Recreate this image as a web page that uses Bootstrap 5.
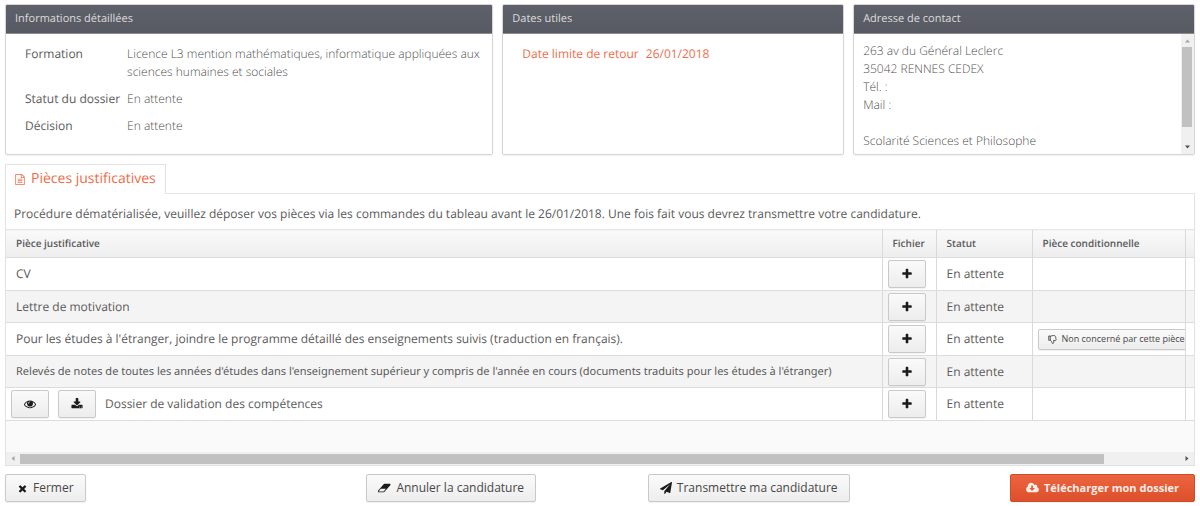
<!DOCTYPE html>
<html lang="fr">
<head>
<meta charset="utf-8">
<meta name="viewport" content="width=device-width, initial-scale=1">
<title>Candidature</title>
<link href="https://cdn.jsdelivr.net/npm/bootstrap@5.3.0/dist/css/bootstrap.min.css" rel="stylesheet">
<style>
  body { font-family: "Open Sans", sans-serif; font-size: 12px; line-height: 18px; color: #5a5a5a; background: #fff; text-rendering: geometricPrecision; }
  .page { padding: 4px 5px; }
  .summary { display: grid; grid-template-columns: 10fr 7fr 7fr; gap: 9px; }
  .panel { height: 151px; border: 1px solid #d5d5d5; border-radius: 2px; box-shadow: 0 1px 2px rgba(0,0,0,.06); overflow: hidden; }
  .panel-title { margin: -1px -1px 0; padding: 0 10px; height: 30px; line-height: 28px; font-size: 11px; font-weight: 400; color: #dcdcdd; background: linear-gradient(#5e6169, #575a62); border-top: 1px solid #aaa; border-bottom: 1px solid #8b8c90; flex: none; }
  .info { display: grid; grid-template-columns: max-content 1fr; gap: 9px 7px; padding: 11px 9px 11px 19px; }
  .info dt { font-weight: 400; }
  .info dd, address { font-weight: 300; color: #505050; }
  .accent { color: #ed6e4a; }
  .info.accent dd { font-weight: 400; color: inherit; }
  address { padding: 8px 9px 0; }
  .bar { background: #f0f0f0; flex: none; }
  .bar svg { display: block; flex: none; }
  .bar-v { width: 13px; padding: 5px 0; }
  .bar-h { height: 13px; padding: 0 5px; }
  .thumb-v { width: 10px; height: 80px; background: #c1c1c1; margin: 4px 0 auto; }
  .thumb-h { width: 92%; height: 10px; background: #c1c1c1; margin: 0 auto 0 5px; }
  .tabs { margin-top: 9px; border-bottom: 1px solid #e6e6e6; }
  .tab-on { margin-bottom: -1px; padding: 0 9px 2px; height: 30px; border: 1px solid #e2e2e2; border-bottom: 0; background: #fff; color: #ed6e4a; font-size: 14px; gap: 6px; }
  .tab-on svg { margin-top: 2px; }
  .pane { border: 1px solid #e2e2e2; border-top: 0; }
  .intro { padding: 11px 8px 6px; }
  .pieces { table-layout: fixed; width: 100%; }
  .pieces th, .pieces td { padding: 0 10px; border-left: 1px solid #d9d9d9; border-bottom: 1px solid #dcdcdc; white-space: nowrap; overflow: hidden; }
  .pieces tr > :first-child { border-left: 0; }
  .pieces th { height: 28px; padding-bottom: 2px; font-size: 10px; font-weight: 600; border-top: 1px solid #e6e6e6; background: linear-gradient(#fafafa, #ededed); }
  .pieces td { height: 33px; }
  .pieces tbody tr:nth-child(even) td { height: 32px; background: #f4f4f4; }
  .pieces td.tools { padding: 0 0 0 5px; }
  .pieces td.long { font-family: "Noto Sans", "Open Sans", sans-serif; font-size: 11px; }
  .c-file { width: 54px; } .c-state { width: 96px; } .c-cond { width: 153px; } .c-more { width: 9px; }
  .rest { height: 31px; background: #fafafa; }
  .act { --bs-btn-padding-x: 12px; --bs-btn-padding-y: 0; --bs-btn-font-size: 12px; --bs-btn-border-radius: 2px; --bs-btn-color: #474747; --bs-btn-border-color: #c9c9c9; --bs-btn-hover-border-color: #b5b5b5; --bs-btn-line-height: 18px; height: 28px; background: linear-gradient(#fafafa, #ededed); box-shadow: 0 1px 1px rgba(0,0,0,.06); display: inline-flex; align-items: center; gap: 5px; }
  .act svg { fill: #1b1b1b; flex: none; }
  .act-tool { --bs-btn-padding-x: 0; width: 38px; justify-content: center; }
  .act-small { --bs-btn-padding-x: 9px; --bs-btn-font-size: 9px; height: 21px; }
  .act-main { --bs-btn-font-size: 11px; --bs-btn-color: #fdeee9; --bs-btn-border-color: #cf4c28; font-weight: 700; background: linear-gradient(#ec6540, #dc502b); }
  .act-main svg { fill: #fdeee9; }
  .own-doc { gap: 9px; }
  .foot .act { --bs-btn-padding-x: 11px; }
  .foot .act-main { --bs-btn-padding-x: 15px; }
</style>
</head>
<body>
<svg class="d-none">
  <symbol id="plus" viewBox="0 0 1792 1792"><path d="M1600 736v192q0 40-28 68t-68 28h-416v416q0 40-28 68t-68 28h-192q-40 0-68-28t-28-68v-416h-416q-40 0-68-28t-28-68v-192q0-40 28-68t68-28h416v-416q0-40 28-68t68-28h192q40 0 68 28t28 68v416h416q40 0 68 28t28 68z"/></symbol>
</svg>
<main class="page">
  <section class="summary">
    <div class="panel">
      <h2 class="panel-title">Informations détaillées</h2>
      <dl class="info m-0">
        <dt>Formation</dt><dd class="m-0">Licence L3 mention mathématiques, informatique appliquées aux sciences humaines et sociales</dd>
        <dt>Statut du dossier</dt><dd class="m-0">En attente</dd>
        <dt>Décision</dt><dd class="m-0">En attente</dd>
      </dl>
    </div>
    <div class="panel">
      <h2 class="panel-title">Dates utiles</h2>
      <dl class="info accent m-0"><dt>Date limite de retour</dt><dd class="m-0">26/01/2018</dd></dl>
    </div>
    <div class="panel d-flex flex-column">
      <h2 class="panel-title">Adresse de contact</h2>
      <div class="d-flex flex-grow-1">
        <address class="flex-grow-1 m-0">263 av du Général Leclerc<br>35042 RENNES CEDEX<br>Tél. :<br>Mail :<br><br>Scolarité Sciences et Philosophe</address>
        <div class="bar bar-v d-flex flex-column align-items-center">
          <svg width="5" height="4" viewBox="0 0 5 4"><path d="M0 3.5 2.500.5 5 3.500z" fill="#a3a3a3"/></svg>
          <div class="thumb-v"></div>
          <svg width="5" height="4" viewBox="0 0 5 4"><path d="M0 .5h5L2.500 3.500z" fill="#505050"/></svg>
        </div>
      </div>
    </div>
  </section>

  <div class="tabs d-flex">
    <div class="tab-on d-flex align-items-center">
      <svg width="10" height="11" viewBox="100 0 1592 1792" fill="currentColor"><path d="M1596 380q28 28 48 76t20 88v1152q0 40-28 68t-68 28h-1344q-40 0-68-28t-28-68v-1600q0-40 28-68t68-28h896q40 0 88 20t76 48zm-444-244v376h376q-10-29-22-41l-313-313q-12-12-41-22zm384 1528v-1024h-416q-40 0-68-28t-28-68v-416h-768v1536h1280zm-1024-864q0-14 9-23t23-9h704q14 0 23 9t9 23v64q0 14-9 23t-23 9h-704q-14 0-23-9t-9-23v-64zm736 224q14 0 23 9t9 23v64q0 14-9 23t-23 9h-704q-14 0-23-9t-9-23v-64q0-14 9-23t23-9h704zm0 256q14 0 23 9t9 23v64q0 14-9 23t-23 9h-704q-14 0-23-9t-9-23v-64q0-14 9-23t23-9h704z"/></svg>
      <span>Pièces justificatives</span>
    </div>
  </div>
  <section class="pane">
    <p class="intro m-0">Procédure dématérialisée, veuillez déposer vos pièces via les commandes du tableau avant le 26/01/2018. Une fois fait vous devrez transmettre votre candidature.</p>
    <table class="pieces">
      <colgroup><col><col class="c-file"><col class="c-state"><col class="c-cond"><col class="c-more"></colgroup>
      <thead><tr><th>Pièce justificative</th><th>Fichier</th><th>Statut</th><th>Pièce conditionnelle</th><th></th></tr></thead>
      <tbody>
        <tr><td>CV</td><td class="tools"><button class="btn act act-tool" aria-label="Ajouter"><svg width="12" height="12"><use href="#plus"/></svg></button></td><td>En attente</td><td></td><td></td></tr>
        <tr><td>Lettre de motivation</td><td class="tools"><button class="btn act act-tool" aria-label="Ajouter"><svg width="12" height="12"><use href="#plus"/></svg></button></td><td>En attente</td><td></td><td></td></tr>
        <tr><td>Pour les études à l'étranger, joindre le programme détaillé des enseignements suivis (traduction en français).</td><td class="tools"><button class="btn act act-tool" aria-label="Ajouter"><svg width="12" height="12"><use href="#plus"/></svg></button></td><td>En attente</td><td class="tools"><button class="btn act act-small"><svg width="9" height="9" viewBox="0 0 18 18"><path d="M1.500 2h3v8.500h-3zM4.500 2.500C7 2 8 1 11 1c3 0 4 1 4 3 1 1 1 2 .5 3 1.500 1.500 1 4-1 4h-3.500c1 3 .5 6-1.500 6-2 0-1-2.500-2.500-4L4.500 10.500" style="fill:none" stroke="#333" stroke-width="1.600"/></svg>Non concerné par cette pièce</button></td><td></td></tr>
        <tr><td class="long">Relevés de notes de toutes les années d'études dans l'enseignement supérieur y compris de l'année en cours (documents traduits pour les études à l'étranger)</td><td class="tools"><button class="btn act act-tool" aria-label="Ajouter"><svg width="12" height="12"><use href="#plus"/></svg></button></td><td>En attente</td><td></td><td></td></tr>
        <tr><td class="tools"><div class="own-doc d-flex align-items-center">
          <button class="btn act act-tool" aria-label="Voir"><svg width="12" height="12" viewBox="0 0 1792 1792"><path d="M1664 960q-152-236-381-353 61 104 61 225 0 185-131.500 316.500t-316.500 131.500-316.500-131.500-131.500-316.500q0-121 61-225-229 117-381 353 133 205 333.500 326.500t434.500 121.500 434.500-121.500 333.500-326.500zm-720-384q0-20-14-34t-34-14q-125 0-214.500 89.500t-89.500 214.500q0 20 14 34t34 14 34-14 14-34q0-86 61-147t147-61q20 0 34-14t14-34zm848 384q0 34-20 69-140 230-376.500 368.500t-499.500 138.500-499.500-139-376.500-368q-20-35-20-69t20-69q140-229 376.500-368t499.500-139 499.500 139 376.500 368q20 35 20 69z"/></svg></button>
          <button class="btn act act-tool" aria-label="Télécharger"><svg width="12" height="12" viewBox="0 0 1792 1792"><path d="M1344 1344q0-26-19-45t-45-19-45 19-19 45 19 45 45 19 45-19 19-45zm256 0q0-26-19-45t-45-19-45 19-19 45 19 45 45 19 45-19 19-45zm128-224v320q0 40-28 68t-68 28h-1472q-40 0-68-28t-28-68v-320q0-40 28-68t68-28h465l135 136q58 56 136 56t136-56l136-136h464q40 0 68 28t28 68zm-325-569q17 41-14 70l-448 448q-18 19-45 19t-45-19l-448-448q-31-29-14-70 17-39 59-39h256v-448q0-26 19-45t45-19h256q26 0 45 19t19 45v448h256q42 0 59 39z"/></svg></button>
          <span>Dossier de validation des compétences</span></div></td><td class="tools"><button class="btn act act-tool" aria-label="Ajouter"><svg width="12" height="12"><use href="#plus"/></svg></button></td><td>En attente</td><td></td><td></td></tr>
      </tbody>
    </table>
    <div class="rest"></div>
    <div class="bar bar-h d-flex align-items-center">
      <svg width="4" height="5" viewBox="0 0 4 5"><path d="M3.500 0v5L.5 2.500z" fill="#a3a3a3"/></svg>
      <div class="thumb-h"></div>
      <svg width="4" height="5" viewBox="0 0 4 5"><path d="M.5 0v5l3-2.500z" fill="#505050"/></svg>
    </div>
  </section>

  <div class="foot row g-0 mt-2">
    <div class="col-3"><button class="btn act"><svg width="11" height="11" viewBox="0 0 1792 1792"><path d="M1490 1322q0 40-28 68l-136 136q-28 28-68 28t-68-28l-294-294-294 294q-28 28-68 28t-68-28l-136-136q-28-28-28-68t28-68l294-294-294-294q-28-28-28-68t28-68l136-136q28-28 68-28t68 28l294 294 294-294q28-28 68-28t68 28l136 136q28 28 28 68t-28 68l-294 294 294 294q28 28 28 68z"/></svg>Fermer</button></div>
    <div class="col-3 text-center"><button class="btn act"><svg width="13" height="12" viewBox="0 0 1920 1792"><path d="M832 1408l336-384h-768l-336 384h768zm1013-1077q15 34 9.500 71.500t-30.500 65.500l-896 1024q-38 44-96 44h-768q-38 0-69.500-20.500t-47.500-54.500q-15-34-9.500-71.500t30.500-65.500l896-1024q38-44 96-44h768q38 0 69.500 20.500t47.500 54.500z"/></svg>Annuler la candidature</button></div>
    <div class="col-3 text-center"><button class="btn act"><svg width="12" height="12" viewBox="0 0 1792 1792"><path d="M1764 11q33 24 27 64l-256 1536q-5 29-32 45-14 8-31 8-11 0-24-5l-453-185-242 295q-18 23-49 23-13 0-22-4-19-7-30.500-23.500t-11.500-36.500v-349l864-1059-1069 925-395-162q-37-14-40-55-2-40 32-59l1664-960q15-9 32-9 20 0 36 11z"/></svg>Transmettre ma candidature</button></div>
    <div class="col-3 text-end"><button class="btn act act-main"><svg width="13" height="12" viewBox="0 0 1920 1792"><path d="M1280 928q0-14-9-23t-23-9h-224v-352q0-13-9.500-22.500t-22.500-9.500h-192q-13 0-22.500 9.500t-9.500 22.500v352h-224q-13 0-22.500 9.500t-9.500 22.500q0 14 9 23l352 352q9 9 23 9t23-9l351-351q10-12 10-24zm640 224q0 159-112.500 271.500t-271.500 112.500h-1088q-185 0-316.500-131.500t-131.500-316.500q0-130 70-240t188-165q-2-30-2-43 0-212 150-362t362-150q156 0 285.500 87t188.500 231q71-62 166-62 106 0 181 75t75 181q0 76-41 138 130 31 213.500 135.500t83.500 238.500z"/></svg>Télécharger mon dossier</button></div>
  </div>
</main>
<script src="https://cdn.jsdelivr.net/npm/bootstrap@5.3.0/dist/js/bootstrap.bundle.min.js"></script>
</body>
</html>
